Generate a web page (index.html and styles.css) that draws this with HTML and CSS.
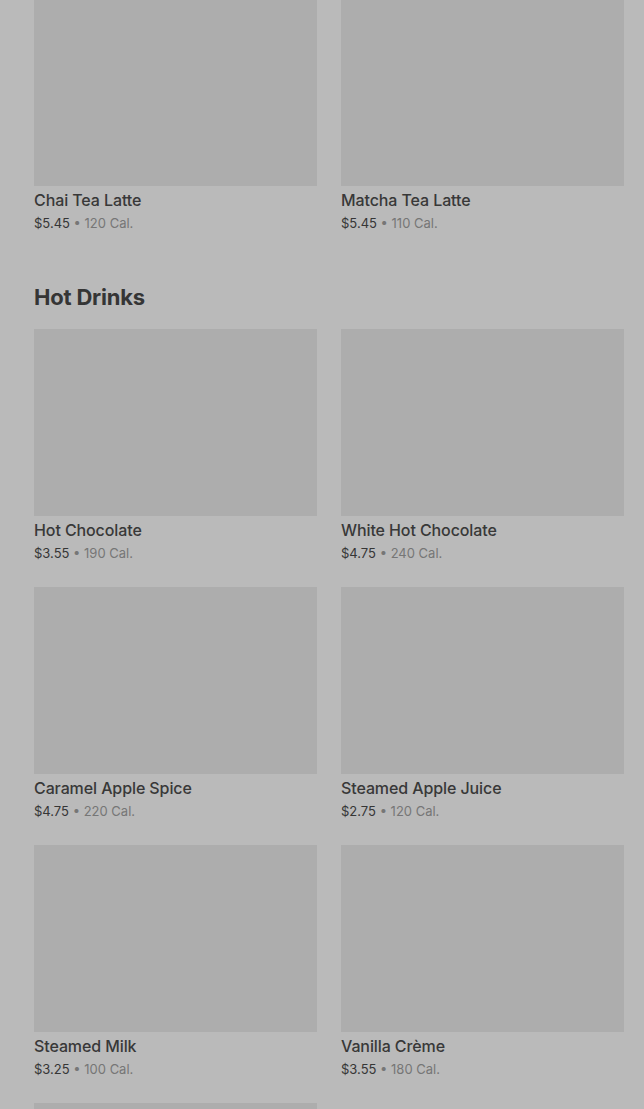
FILE: index.html
```html
<!DOCTYPE html>
<html lang="en">
<head>
    <meta charset="UTF-8">
    <meta name="viewport" content="width=device-width, initial-scale=1.0">
    <title>Menu</title>
    <link rel="stylesheet" href="styles.css">
</head>
<body>
    <div class="menu">
        <!-- Tail of the previous section -->
        <div class="item-grid">
            <div class="item">
                <div class="item-image"></div>
                <p class="item-name">Chai Tea Latte</p>
                <p class="item-meta"><span class="price">$5.45</span> • 120 Cal.</p>
            </div>
            <div class="item">
                <div class="item-image"></div>
                <p class="item-name">Matcha Tea Latte</p>
                <p class="item-meta"><span class="price">$5.45</span> • 110 Cal.</p>
            </div>
        </div>

        <section class="menu-section">
            <h2 class="section-title">Hot Drinks</h2>
            <div class="item-grid">
                <div class="item">
                    <div class="item-image"></div>
                    <p class="item-name">Hot Chocolate</p>
                    <p class="item-meta"><span class="price">$3.55</span> • 190 Cal.</p>
                </div>
                <div class="item">
                    <div class="item-image"></div>
                    <p class="item-name">White Hot Chocolate</p>
                    <p class="item-meta"><span class="price">$4.75</span> • 240 Cal.</p>
                </div>
                <div class="item">
                    <div class="item-image"></div>
                    <p class="item-name">Caramel Apple Spice</p>
                    <p class="item-meta"><span class="price">$4.75</span> • 220 Cal.</p>
                </div>
                <div class="item">
                    <div class="item-image"></div>
                    <p class="item-name">Steamed Apple Juice</p>
                    <p class="item-meta"><span class="price">$2.75</span> • 120 Cal.</p>
                </div>
                <div class="item">
                    <div class="item-image"></div>
                    <p class="item-name">Steamed Milk</p>
                    <p class="item-meta"><span class="price">$3.25</span> • 100 Cal.</p>
                </div>
                <div class="item">
                    <div class="item-image"></div>
                    <p class="item-name">Vanilla Crème</p>
                    <p class="item-meta"><span class="price">$3.55</span> • 180 Cal.</p>
                </div>
                <div class="item">
                    <div class="item-image"></div>
                </div>
            </div>
        </section>
    </div>
</body>
</html>
```

FILE: styles.css
```css
body {
    margin: 0;
    background: #bababa;
    font-family: Inter, "Noto Sans", sans-serif;
    color: #363636;
    height: 1109px;
    overflow: hidden;
}

.menu {
    margin-top: -1px;
    padding: 0 20px 0 34px;
}

.item-grid {
    display: grid;
    grid-template-columns: 1fr 1fr;
    column-gap: 24px;
    row-gap: 22px;
}

.item-image {
    height: 187px;
    background: #adadad;
}

.item-name {
    margin: 3px 0 0;
    font-size: 16px;
    font-weight: 500;
    line-height: 22px;
    color: #383838;
    letter-spacing: -0.1px;
}

.item-meta {
    margin: 0;
    font-size: 13px;
    line-height: 24px;
    color: #767676;
}

.price {
    color: #363636;
}

.menu-section {
    margin-top: 46px;
}

.section-title {
    margin: 0 0 16px;
    font-size: 22px;
    line-height: 32px;
    font-weight: 700;
    letter-spacing: -0.2px;
    color: #353535;
}
```
